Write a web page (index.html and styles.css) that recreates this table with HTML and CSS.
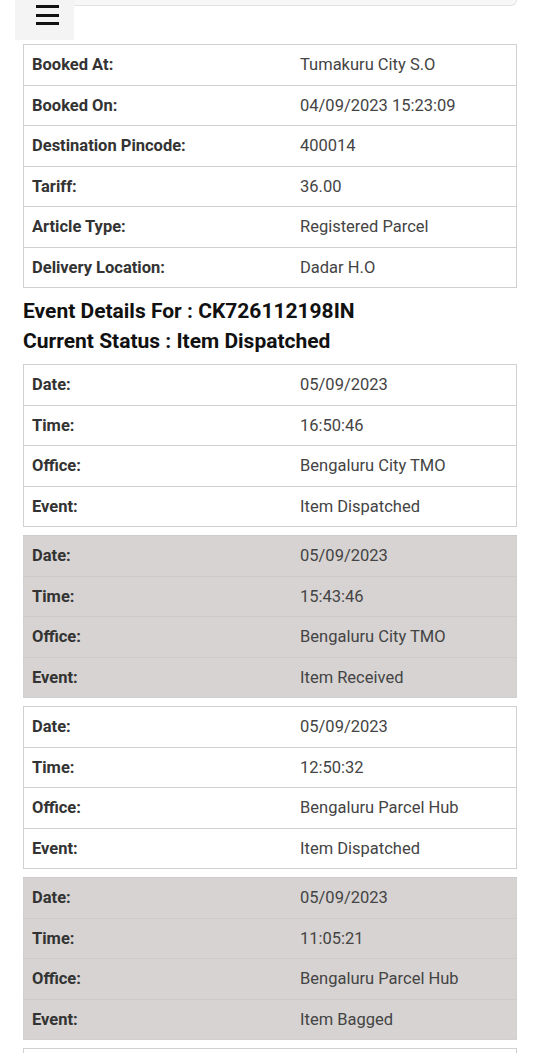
FILE: index.html
```html
<!DOCTYPE html>
<html lang="en">
<head>
    <meta charset="UTF-8">
    <meta name="viewport" content="width=device-width, initial-scale=1.0">
    <title>Track Consignment</title>
    <link rel="stylesheet" href="styles.css">
</head>
<body>
    <div class="topbar">
        <div class="menu-btn">
            <svg width="23" height="20" viewBox="0 0 23 20">
                <rect x="0" y="0" width="23" height="3"></rect>
                <rect x="0" y="9" width="23" height="3"></rect>
                <rect x="0" y="17" width="23" height="3"></rect>
            </svg>
        </div>
        <div class="topbar-edge"></div>
    </div>

    <div class="content">
        <table class="info">
            <tr><td class="label">Booked At:</td><td>Tumakuru City S.O</td></tr>
            <tr><td class="label">Booked On:</td><td>04/09/2023 15:23:09</td></tr>
            <tr><td class="label">Destination Pincode:</td><td>400014</td></tr>
            <tr><td class="label">Tariff:</td><td>36.00</td></tr>
            <tr><td class="label">Article Type:</td><td>Registered Parcel</td></tr>
            <tr><td class="label">Delivery Location:</td><td>Dadar H.O</td></tr>
        </table>

        <h2 class="event-title">Event Details For : CK726112198IN<br>Current Status : Item Dispatched</h2>

        <table class="info">
            <tr><td class="label">Date:</td><td>05/09/2023</td></tr>
            <tr><td class="label">Time:</td><td>16:50:46</td></tr>
            <tr><td class="label">Office:</td><td>Bengaluru City TMO</td></tr>
            <tr><td class="label">Event:</td><td>Item Dispatched</td></tr>
        </table>

        <table class="info alt">
            <tr><td class="label">Date:</td><td>05/09/2023</td></tr>
            <tr><td class="label">Time:</td><td>15:43:46</td></tr>
            <tr><td class="label">Office:</td><td>Bengaluru City TMO</td></tr>
            <tr><td class="label">Event:</td><td>Item Received</td></tr>
        </table>

        <table class="info">
            <tr><td class="label">Date:</td><td>05/09/2023</td></tr>
            <tr><td class="label">Time:</td><td>12:50:32</td></tr>
            <tr><td class="label">Office:</td><td>Bengaluru Parcel Hub</td></tr>
            <tr><td class="label">Event:</td><td>Item Dispatched</td></tr>
        </table>

        <table class="info alt">
            <tr><td class="label">Date:</td><td>05/09/2023</td></tr>
            <tr><td class="label">Time:</td><td>11:05:21</td></tr>
            <tr><td class="label">Office:</td><td>Bengaluru Parcel Hub</td></tr>
            <tr><td class="label">Event:</td><td>Item Bagged</td></tr>
        </table>

        <!-- next event, only its top edge is on screen -->
        <table class="info">
            <tr><td class="label"></td><td></td></tr>
        </table>
    </div>
</body>
</html>
```

FILE: styles.css
```css
body {
    margin: 0;
    font-family: Roboto, "Liberation Sans", Arial, sans-serif;
    font-size: 16.5px;
    color: #333;
    background: #fff;
    overflow: hidden;
}

/* top menu strip */
.topbar {
    display: flex;
    align-items: flex-start;
    padding: 0 23px 0 15px;
}

.menu-btn {
    width: 59px;
    height: 40px;
    background: #f4f4f4;
    padding: 5px 0 0 21px;
    box-sizing: border-box;
}

.menu-btn svg {
    display: block;
    fill: #111;
}

.topbar-edge {
    flex: 1;
    height: 5px;
    background: #f7f7f7;
    border: 1px solid #e4e4e4;
    border-top: none;
    border-left: none;
    border-radius: 0 0 6px 0;
}

.content {
    padding: 4px 23px 0 23px;
}

/* detail tables */
.info {
    width: 100%;
    border-collapse: collapse;
    border: 1px solid #d0d0d0;
    margin-bottom: 8px;
    background: #fff;
}

.info td {
    border-top: 1px solid #d0d0d0;
    padding: 10px 8px;
    height: 19.5px;
    line-height: 19.5px;
    color: #444;
}

.info td.label {
    width: 252px;
    font-weight: bold;
    color: #333;
}

.info.alt {
    background: #d6d3d2;
}

.info.alt td {
    border-top-color: #cdcaca;
}

.event-title {
    margin: 0 0 8px 0;
    font-size: 21px;
    line-height: 30px;
    font-weight: bold;
    color: #111;
}
```
